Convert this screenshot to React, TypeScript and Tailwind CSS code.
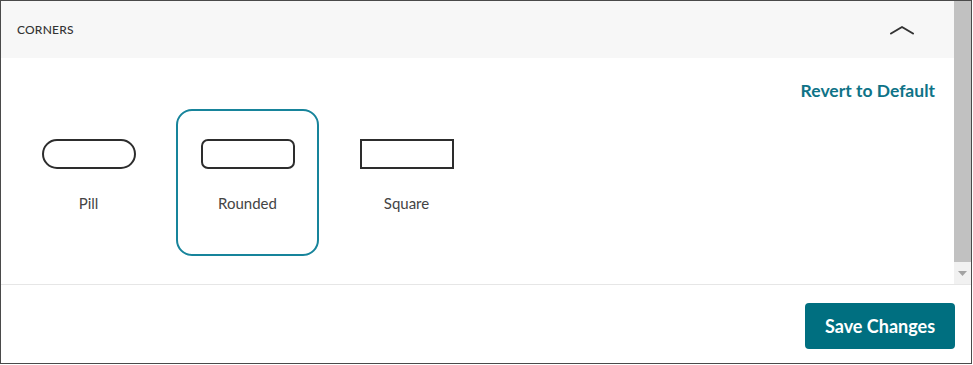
import React, { useState } from "react"

const options = [
  { key: "pill", label: "Pill", shape: "rounded-full" },
  { key: "rounded", label: "Rounded", shape: "rounded-[7px]" },
  { key: "square", label: "Square", shape: "rounded-none" },
]

export default function App() {
  const [selected, setSelected] = useState("rounded")

  return (
    <div className="w-[973px] h-[365px] bg-white font-['Lato',sans-serif]">
      <div className="w-[972px] h-[364px] border border-[#4a4a4a] flex flex-col">
        <div className="flex h-[284px] border-b border-[#e6e6e6]">
          <div className="flex-1 flex flex-col">
            <div className="h-[57px] bg-[#f7f7f7] flex items-center justify-between pl-[16px] pr-[40px]">
              <span className="text-[12px] font-medium text-[#333] tracking-[0.2px]">CORNERS</span>
              <svg width="24" height="10" viewBox="0 0 24 10" fill="none">
                <path d="M1 8.5 L12 2 L23 8.5" stroke="#333" strokeWidth="2" strokeLinecap="round" strokeLinejoin="round" />
              </svg>
            </div>
            <div className="flex flex-col px-[16px]">
              <div className="flex justify-end pt-[21px] pr-[3px]">
                <button className="text-[17.5px] font-bold text-[#0e7387] leading-[24px]">Revert to Default</button>
              </div>
              <div className="flex gap-[16px] mt-[6px]">
                {options.map((o) => (
                  <button
                    key={o.key}
                    onClick={() => setSelected(o.key)}
                    className={`w-[143px] h-[147px] rounded-[16px] border-2 flex flex-col items-center pt-[28px] ${
                      selected === o.key ? "border-[#17849b]" : "border-transparent"
                    }`}
                  >
                    <span className={`block w-[94px] h-[30px] border-2 border-[#2d2d2d] ${o.shape}`} />
                    <span className="mt-[24px] text-[15px] leading-[20px] text-[#444]">{o.label}</span>
                  </button>
                ))}
              </div>
            </div>
          </div>
          <div className="w-[17px] bg-[#f1f1f1] flex flex-col">
            <div className="h-[261px] bg-[#c1c1c1]" />
            <div className="flex-1 flex items-center justify-center">
              <svg width="9" height="5" viewBox="0 0 9 5">
                <path d="M0 0 H9 L4.5 5 Z" fill="#a3a3a3" />
              </svg>
            </div>
          </div>
        </div>
        <div className="flex-1 flex justify-end items-start pt-[18px] pr-[16px]">
          <button className="w-[150px] h-[46px] rounded-[4px] bg-[#006f80] text-white text-[18px] font-bold">
            Save Changes
          </button>
        </div>
      </div>
    </div>
  )
}
